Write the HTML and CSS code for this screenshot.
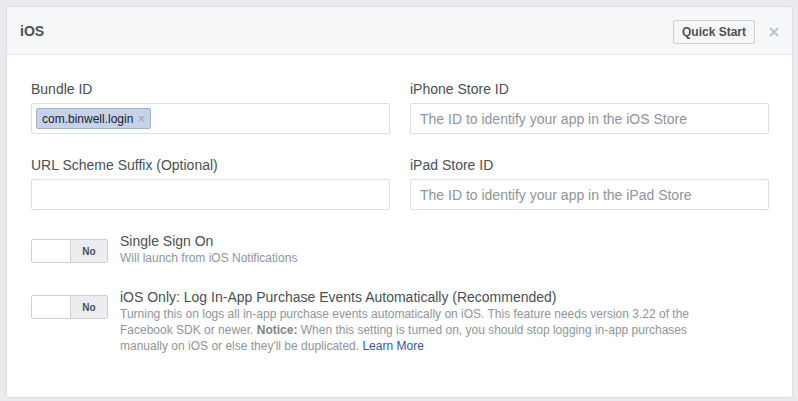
FILE: index.html
```html
<!DOCTYPE html>
<html lang="en">
<head>
    <meta charset="UTF-8">
    <title>iOS Settings</title>
    <link rel="stylesheet" href="styles.css">
</head>
<body>
    <div class="card">
        <div class="card-header">
            <div class="card-title">iOS</div>
            <button class="quickStart">Quick Start</button>
            <span class="closeIcon">
                <svg width="10" height="10" viewBox="0 0 10 10"><path d="M1 1 L9 9 M9 1 L1 9" stroke="#bec2c9" stroke-width="2"/></svg>
            </span>
        </div>

        <div class="card-body">
            <div class="fieldGrid">
                <div class="field">
                    <label>Bundle ID</label>
                    <div class="inputBox">
                        <span class="chip">com.binwell.login <span class="chipX">&times;</span></span>
                    </div>
                </div>
                <div class="field">
                    <label>iPhone Store ID</label>
                    <div class="inputBox placeholder">The ID to identify your app in the iOS Store</div>
                </div>
                <div class="field">
                    <label>URL Scheme Suffix (Optional)</label>
                    <div class="inputBox"></div>
                </div>
                <div class="field">
                    <label>iPad Store ID</label>
                    <div class="inputBox placeholder">The ID to identify your app in the iPad Store</div>
                </div>
            </div>

            <div class="toggleRow">
                <div class="toggle"><span class="toggleOn"></span><span class="toggleOff">No</span></div>
                <div class="toggleText">
                    <div class="toggleTitle">Single Sign On</div>
                    <div class="toggleDesc">Will launch from iOS Notifications</div>
                </div>
            </div>

            <div class="toggleRow">
                <div class="toggle"><span class="toggleOn"></span><span class="toggleOff">No</span></div>
                <div class="toggleText">
                    <div class="toggleTitle">iOS Only: Log In-App Purchase Events Automatically (Recommended)</div>
                    <div class="toggleDesc wide">Turning this on logs all in-app purchase events automatically on iOS. This feature needs version 3.22 of the Facebook SDK or newer. <b>Notice:</b> When this setting is turned on, you should stop logging in-app purchases manually on iOS or else they'll be duplicated. <a href="#">Learn More</a></div>
                </div>
            </div>
        </div>
    </div>
</body>
</html>
```

FILE: styles.css
```css
body {
    margin: 0;
    padding: 6px 5px 4px 6px;
    background-color: #e9ebee;
    font-family: "Liberation Sans", Arial, sans-serif;
    color: #4b4f56;
}

.card {
    background-color: #fff;
    border: 1px solid #dddfe2;
    border-radius: 3px;
}

.card-header {
    display: flex;
    align-items: center;
    height: 47px;
    padding: 0 13px 0 13px;
    background-color: #f6f7f9;
    border-bottom: 1px solid #e5e5e5;
    border-radius: 3px 3px 0 0;
}

.card-title {
    flex: 1;
    font-size: 14px;
    font-weight: bold;
    color: #4b4f56;
}

.quickStart {
    height: 24px;
    width: 82px;
    margin-top: 2px;
    padding: 0;
    background-color: #f6f7f9;
    border: 1px solid #ced0d4;
    border-radius: 2px;
    font-family: "Liberation Sans", Arial, sans-serif;
    font-size: 12px;
    font-weight: bold;
    color: #4b4f56;
}

.closeIcon {
    display: flex;
    margin-left: 14px;
    margin-top: 2px;
}

.card-body {
    padding: 25px 23px 43px 24px;
}

.fieldGrid {
    display: grid;
    grid-template-columns: 1fr 1fr;
    column-gap: 20px;
    row-gap: 22px;
}

.field label {
    display: block;
    font-size: 14px;
    line-height: 18px;
    margin-bottom: 5px;
}

.inputBox {
    display: flex;
    align-items: center;
    height: 29px;
    padding: 0 4px;
    border: 1px solid #dddfe2;
    border-radius: 2px;
    font-size: 14px;
}

.placeholder {
    padding-left: 9px;
    color: #90949c;
}

.chip {
    display: inline-flex;
    align-items: center;
    height: 19px;
    padding: 0 5px;
    background-color: #c5d2e8;
    border: 1px solid #9cb0d0;
    border-radius: 2px;
    font-size: 12px;
    color: #1d2129;
}

.chipX {
    margin-left: 4px;
    color: #9aa3b0;
    font-size: 13px;
}

.toggleRow {
    display: flex;
    align-items: flex-start;
    margin-top: 22px;
}

.toggle {
    display: flex;
    width: 75px;
    height: 22px;
    margin-top: 7px;
    margin-right: 12px;
    border: 1px solid #ccd0d5;
    border-radius: 2px;
    overflow: hidden;
}

.toggleOn {
    width: 38px;
    background-color: #fff;
}

.toggleOff {
    flex: 1;
    display: flex;
    align-items: center;
    justify-content: center;
    background-color: #ebedf0;
    border-left: 1px solid #ccd0d5;
    font-size: 10px;
    font-weight: bold;
    color: #4b4f56;
}

.toggleTitle {
    font-size: 14px;
    line-height: 18px;
    color: #4b4f56;
}

.toggleDesc {
    font-size: 12px;
    line-height: 16px;
    color: #90949c;
}

.toggleDesc.wide {
    max-width: 590px;
}

.toggleDesc b {
    color: #7f838a;
}

.toggleDesc a {
    color: #365899;
    text-decoration: none;
}
```
